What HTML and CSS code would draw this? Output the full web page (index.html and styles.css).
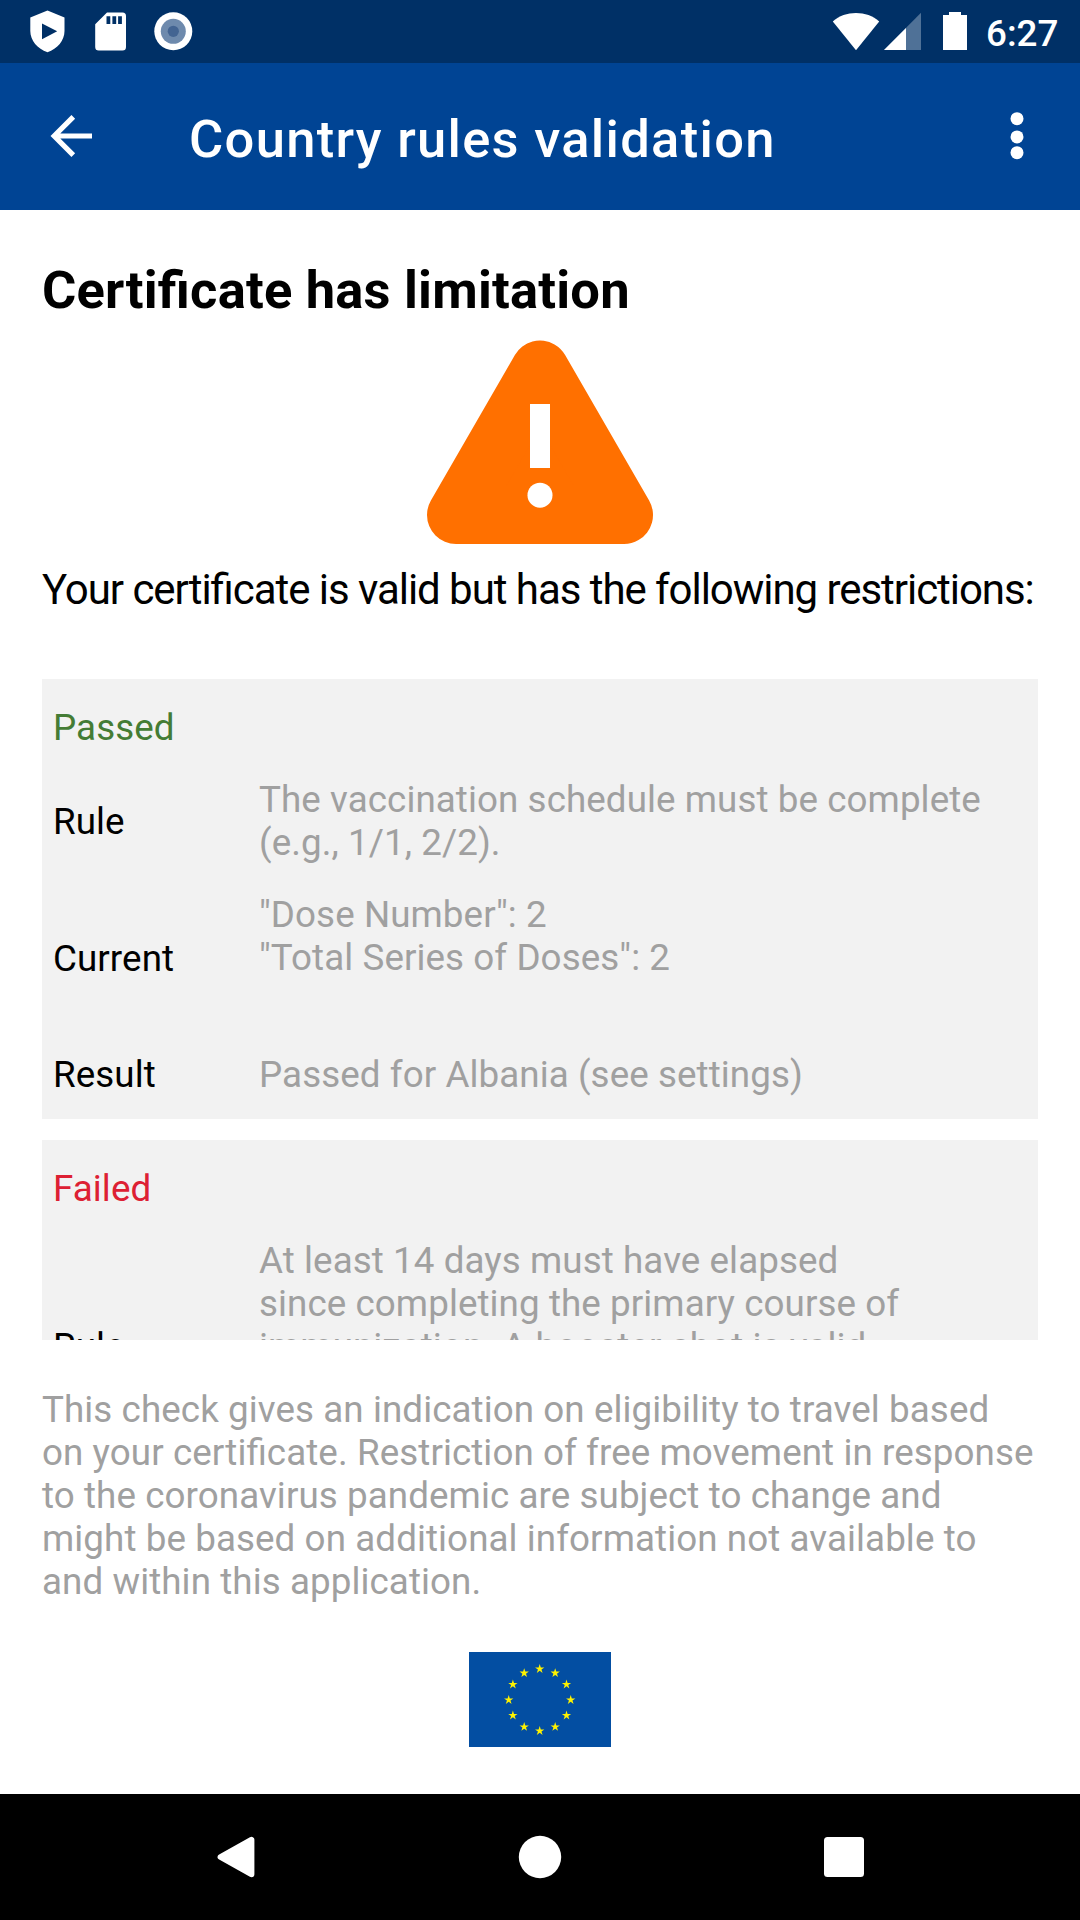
FILE: index.html
```html
<!DOCTYPE html>
<html lang="en">
<head>
<meta charset="utf-8">
<title>Country rules validation</title>
<link rel="stylesheet" href="styles.css">
</head>
<body>
<div class="screen">
  <div class="status-bar">
    <svg class="status-left" width="200" height="63" viewBox="0 0 200 63">
      <path fill="#fff" fill-rule="evenodd" d="M47.5 10.5 64.5 17.5V31C64.5 40.5 57.500 49 47.500 52.200C37.500 49 30.300 40.500 30.300 31V17.500ZM42 23.600V39.200L57.200 31.300Z"/>
      <path fill="#fff" fill-rule="evenodd" d="M107 12.500H122.500Q126 12.500 126 16V47Q126 50.500 122.500 50.500H98.700Q95.200 50.500 95.200 47V24.300ZM106.500 16.300V24H110.300V16.300ZM112.400 16.300V24H116.200V16.300ZM118.100 16.300V24H121.900V16.300Z"/>
      <circle cx="173.300" cy="31.300" r="19" fill="#fff"/>
      <circle cx="173.300" cy="31.300" r="12.500" fill="#6e8aad"/>
      <circle cx="173.300" cy="31.300" r="5.600" fill="#436492"/>
    </svg>
    <div class="status-right">
      <svg width="136" height="63" viewBox="832 0 136 63">
        <path fill="#fff" d="M832.800 21.500C845 10.300 867 10.300 879.200 21.500L856 50.300Z"/>
        <path fill="#4f7197" d="M921 12.800V50H884Z"/>
        <path fill="#fff" d="M906 28V50H884Z"/>
        <path fill="#fff" d="M949 12H961V15H967V50H943V15H949Z"/>
      </svg>
      <span class="clock">6:27</span>
    </div>
  </div>
  <header class="app-bar">
    <svg class="back" width="42" height="42" viewBox="0 0 42 42" fill="none" stroke="#fff">
      <path stroke-width="5.200" d="M42 21H4M23.300 1.900 4.200 21 23.300 40.100"/>
    </svg>
    <h1 class="title">Country rules validation</h1>
    <svg class="more" width="14" height="48" viewBox="0 0 14 48" fill="#fff">
      <circle cx="7" cy="6.700" r="6.500"/><circle cx="7" cy="24.900" r="6.500"/><circle cx="7" cy="40.700" r="6.500"/>
    </svg>
  </header>
  <main class="content">
    <h2 class="heading">Certificate has limitation</h2>
    <svg class="warning" width="226" height="204" viewBox="427 340 226 204">
      <path fill="#ff7000" stroke="#ff7000" stroke-width="58" stroke-linejoin="round" d="M540 369.500 624 515H456Z"/>
      <path fill="#fff" d="M530 404H550V468H530Z"/>
      <circle cx="540" cy="495.200" r="12.500" fill="#fff"/>
    </svg>
    <p class="summary">Your certificate is valid but has the following restrictions:</p>
    <section class="rules">
      <article class="card">
        <div class="verdict passed">Passed</div>
        <div class="row"><span class="label">Rule</span><p class="value">The vaccination schedule must be complete<br>(e.g., 1/1, 2/2).</p></div>
        <div class="row current"><span class="label">Current</span><p class="value">"Dose Number": 2<br>"Total Series of Doses": 2</p></div>
        <div class="row"><span class="label">Result</span><p class="value">Passed for Albania (see settings)</p></div>
      </article>
      <article class="card">
        <div class="verdict failed">Failed</div>
        <div class="row long"><span class="label">Rule</span><p class="value">At least 14 days must have elapsed<br>since completing the primary course of<br>immunization. A booster shot is valid</p></div>
      </article>
    </section>
    <p class="note">This check gives an indication on eligibility to travel based<br>on your certificate. Restriction of free movement in response<br>to the coronavirus pandemic are subject to change and<br>might be based on additional information not available to<br>and within this application.</p>
    <svg class="flag" width="142" height="95" viewBox="0 0 142 95">
      <defs><path id="star" fill="#fff200" d="M0-4.900 1.100-1.515H4.660L1.780.579 2.880 3.964 0 1.872-2.880 3.964-1.780.579-4.660-1.515H-1.100Z"/></defs>
      <path fill="#034ea2" d="M0 0H142V95H0Z"/>
      <use href="#star" x="70.700" y="17"/><use href="#star" x="86.200" y="21.100"/><use href="#star" x="97.500" y="32.500"/>
      <use href="#star" x="101.700" y="48"/><use href="#star" x="97.500" y="63.500"/><use href="#star" x="86.200" y="74.900"/>
      <use href="#star" x="70.700" y="79"/><use href="#star" x="55.200" y="74.900"/><use href="#star" x="43.900" y="63.500"/>
      <use href="#star" x="39.700" y="48"/><use href="#star" x="43.900" y="32.500"/><use href="#star" x="55.200" y="21.100"/>
    </svg>
  </main>
  <nav class="nav-bar">
    <svg width="44" height="44" viewBox="0 0 44 44"><path fill="#fff" stroke="#fff" stroke-width="6" stroke-linejoin="round" d="M37.400 4.800V39.200L6.600 22Z"/></svg>
    <svg width="44" height="44" viewBox="0 0 44 44"><circle cx="22" cy="22" r="21.200" fill="#fff"/></svg>
    <svg width="44" height="44" viewBox="0 0 44 44"><rect x="2" y="2" width="40" height="40" rx="3.500" fill="#fff"/></svg>
  </nav>
</div>
</body>
</html>
```
FILE: styles.css
```css
* { box-sizing: border-box; margin: 0; padding: 0; }
body {
  font-family: Roboto, "Noto Sans", sans-serif;
  font-feature-settings: "liga" 1;
  background: #fff;
  color: #000;
}
svg { display: block; flex: none; }
.screen {
  width: 1080px;
  height: 1920px;
  display: flex;
  flex-direction: column;
  overflow: hidden;
}
.status-bar {
  height: 63px;
  flex: none;
  display: flex;
  justify-content: space-between;
  background: #003066;
}
.status-right { display: flex; width: 248px; }
.clock {
  margin-left: 18px;
  font-size: 36.750px;
  font-weight: 500;
  line-height: 43px;
  padding-top: 12px;
  color: #fff;
}
.app-bar {
  height: 147px;
  flex: none;
  display: flex;
  align-items: center;
  background: #004494;
  color: #fff;
}
.back { margin: 0 0 1px 50px; }
.title {
  margin-left: 97px;
  padding-top: 4px;
  font-size: 52.500px;
  font-weight: 500;
  line-height: 62px;
  letter-spacing: 1.300px;
  white-space: nowrap;
}
.more { margin: 0 56.500px 1px auto; }
.content {
  flex: 1;
  min-height: 0;
  padding: 49px 42px 0;
  display: flex;
  flex-direction: column;
  align-items: center;
}
.heading {
  align-self: stretch;
  font-size: 52.500px;
  font-weight: 700;
  line-height: 62px;
  letter-spacing: 0.200px;
}
.warning { margin-top: 19px; overflow: visible; }
.summary {
  align-self: stretch;
  margin-top: 21px;
  font-size: 42px;
  line-height: 50px;
  letter-spacing: -1.050px;
  white-space: nowrap;
}
.rules {
  width: 996px;
  height: 661px;
  margin-top: 64px;
  flex: none;
  display: flex;
  flex-direction: column;
  gap: 21px;
  overflow: hidden;
  font-size: 36.750px;
  line-height: 43px;
  letter-spacing: 0.080px;
}
.card {
  flex: none;
  padding: 27px 11px 23px;
  background: #f2f2f2;
}
.verdict { margin-bottom: 29px; }
.passed { color: #447c35; }
.failed { color: #dd2033; }
.row {
  display: grid;
  grid-template-columns: 206px 1fr;
  align-items: center;
}
.row + .row { margin-top: 29px; }
.current { height: 131px; }
.current .value { align-self: start; }
.long { height: 215px; }
.long .value { align-self: start; }
.value { color: #a0a0a0; white-space: nowrap; }
.note {
  align-self: stretch;
  margin-top: 48px;
  color: #a0a0a0;
  font-size: 36.750px;
  line-height: 43px;
  letter-spacing: 0.085px;
  white-space: nowrap;
}
.flag { margin-top: 49px; }
.nav-bar {
  height: 126px;
  flex: none;
  padding: 0 214px;
  display: flex;
  align-items: center;
  justify-content: space-between;
  background: #000;
}
```
